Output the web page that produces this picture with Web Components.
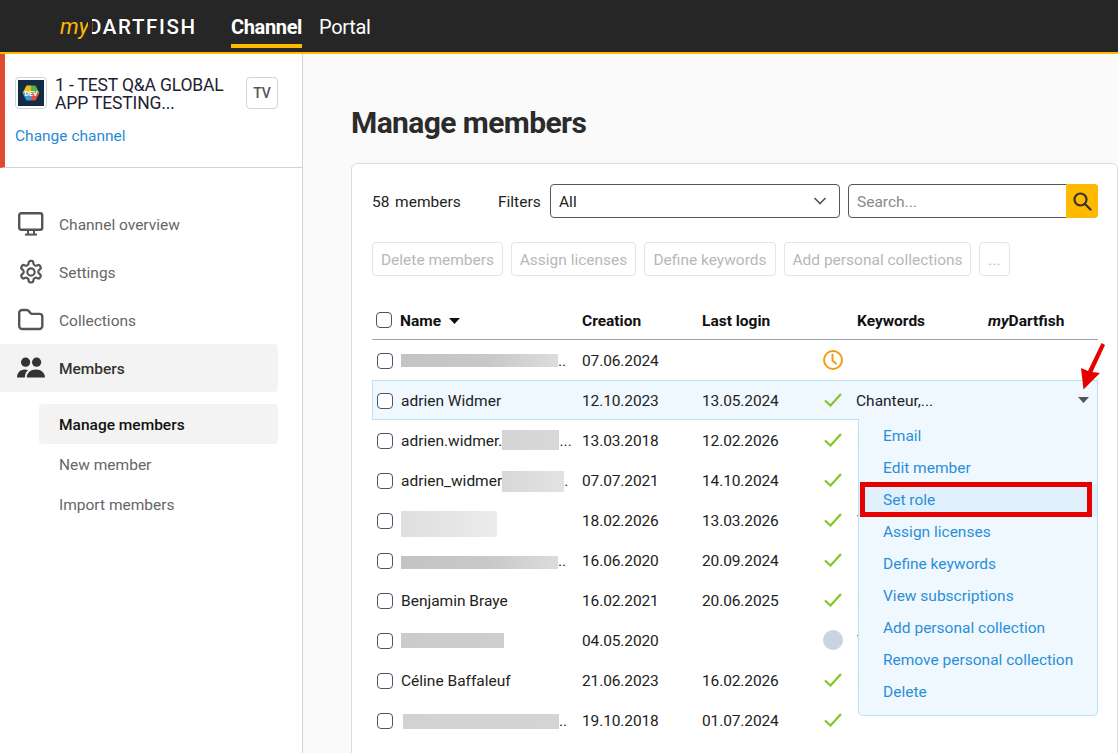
<!DOCTYPE html>
<html lang="en"><head><meta charset="utf-8"><title>Manage members</title>
<style>
html,body{margin:0;height:100%;overflow:hidden;background:#fafafa}
body{font:15.5px/20px Roboto,"Liberation Sans",sans-serif;letter-spacing:0;color:#222}
</style></head><body>
<x-app>
  <x-topbar slot="top"></x-topbar>
  <x-sidebar slot="side">
    <x-channel-card></x-channel-card>
    <x-nav-item icon="monitor" label="Channel overview"></x-nav-item>
    <x-nav-item icon="gear" label="Settings"></x-nav-item>
    <x-nav-item icon="folder" label="Collections"></x-nav-item>
    <x-nav-item icon="people" label="Members" active></x-nav-item>
    <x-sub-item label="Manage members" active first></x-sub-item>
    <x-sub-item label="New member"></x-sub-item>
    <x-sub-item label="Import members"></x-sub-item>
  </x-sidebar>
  <x-members slot="main">
    <x-row created="07.06.2024" status="pending"><x-blur w="157" h="13" y="-1"></x-blur>..</x-row>
    <x-row created="12.10.2023" login="13.05.2024" status="ok" keywords="Chanteur,..." open>adrien Widmer</x-row>
    <x-row created="13.03.2018" login="12.02.2026" status="ok" keywords="B">adrien.widmer.<x-blur w="57" h="20" y="-2" bg="#d4d4d4,#d8d8d8"></x-blur>...</x-row>
    <x-row created="07.07.2021" login="14.10.2024" status="ok">adrien_widmer<x-blur w="62" h="21" y="0" bg="#d8d8d8,#e2e2e2"></x-blur>.</x-row>
    <x-row created="18.02.2026" login="13.03.2026" status="ok" keywords="T"><x-blur w="96" h="26" y="6" bg="#dedede,#ececec"></x-blur></x-row>
    <x-row created="16.06.2020" login="20.09.2024" status="ok"><x-blur w="157" h="13" y="3"></x-blur>..</x-row>
    <x-row created="16.02.2021" login="20.06.2025" status="ok" keywords="B">Benjamin Braye</x-row>
    <x-row created="04.05.2020" status="none" keywords="T"><x-blur w="105" h="15" x="-2" y="-2" bg="#cbcbcb,#cecece"></x-blur></x-row>
    <x-row created="21.06.2023" login="16.02.2026" status="ok" keywords="B">Céline Baffaleuf</x-row>
    <x-row created="19.10.2018" login="01.07.2024" status="ok"><x-blur w="156" h="15" x="2" y="1" bg="#d2d2d2,#d4d4d4"></x-blur>..</x-row>
  </x-members>
</x-app>
<script>
const FONT='Roboto,"Liberation Sans",sans-serif';
function def(name,css,html,init){
  customElements.define(name,class extends HTMLElement{
    connectedCallback(){
      if(this.shadowRoot)return;
      const r=this.attachShadow({mode:'open'});
      r.innerHTML='<style>'+css+'</style>'+(typeof html==='function'?html(this):html);
      if(init)init(this,r);
    }
  });
}
const ICONS={
 monitor:'<svg width="28" height="26" viewBox="0 0 28 26" fill="none" stroke="#555" stroke-width="2.4"><rect x="2.2" y="2.2" width="23" height="16.6" rx="2"/><path d="M11 20v3M17 20v3" stroke-width="2"/><path d="M8 23.6h12" stroke-width="2"/></svg>',
 gear:'<svg width="28" height="26" viewBox="1 0 26 26" fill="none" stroke="#555" stroke-width="2" stroke-linecap="round" stroke-linejoin="round"><g transform="translate(1,0) scale(1.083)"><circle cx="12" cy="12" r="3.4"/><path d="M12.2 1.8h-.4a2 2 0 0 0-2 2v.2a2 2 0 0 1-1 1.7l-.4.25a2 2 0 0 1-2 0l-.17-.1a2 2 0 0 0-2.7.73l-.2.36a2 2 0 0 0 .73 2.73l.17.1a2 2 0 0 1 1 1.73v.5a2 2 0 0 1-1 1.74l-.17.1a2 2 0 0 0-.73 2.73l.2.36a2 2 0 0 0 2.7.73l.17-.1a2 2 0 0 1 2 0l.4.25a2 2 0 0 1 1 1.7v.2a2 2 0 0 0 2 2h.4a2 2 0 0 0 2-2v-.2a2 2 0 0 1 1-1.7l.4-.25a2 2 0 0 1 2 0l.17.1a2 2 0 0 0 2.7-.73l.2-.36a2 2 0 0 0-.73-2.73l-.17-.1a2 2 0 0 1-1-1.74v-.5a2 2 0 0 1 1-1.73l.17-.1a2 2 0 0 0 .73-2.73l-.2-.36a2 2 0 0 0-2.7-.73l-.17.1a2 2 0 0 1-2 0l-.4-.25a2 2 0 0 1-1-1.7v-.2a2 2 0 0 0-2-2z"/></g></svg>',
 folder:'<svg width="28" height="26" viewBox="0 0 28 26" fill="none" stroke="#555" stroke-width="2.4" stroke-linejoin="round"><path d="M2.2 6a3 3 0 0 1 3-3h4.300a3 3 0 0 1 2.300 1.100l1.300 1.700a3 3 0 0 0 2.300 1.100h7.400a2.500 2.500 0 0 1 2.500 2.500v9.600a3 3 0 0 1-3 3H5.200a3 3 0 0 1-3-3z"/></svg>',
 people:'<svg width="28" height="26" viewBox="0 0 28 26" fill="#333"><circle cx="8.6" cy="7.2" r="4.6"/><circle cx="19.6" cy="7.2" r="4.6"/><path d="M0 22.4c0-4.4 3.200-8 7.500-8 1.300 0 2.500.3 3.500.9-2 1.600-3.100 4-3.100 7.100H0zM9.800 22.4c0-4.600 3.900-8 9.100-8s9.100 3.400 9.100 8z"/></svg>'
};
def('x-app',`:host{display:grid;grid-template:54px 699px / 303px 815px;width:1118px;height:753px;overflow:hidden}
 .t{grid-column:1/3}`,
 `<div class="t"><slot name="top"></slot></div><slot name="side"></slot><slot name="main"></slot>`);
def('x-topbar',`:host{display:flex;align-items:stretch;height:54px;box-sizing:border-box;background:#262626;border-bottom:2px solid #ffb900;font-family:${FONT};color:#fff;letter-spacing:0}
 .logo{display:flex;align-items:center;margin-left:60px;width:171px;height:52px;position:relative}
 .my{font:italic 400 22px/24px ${FONT};color:#ffb900;width:28px;margin-top:2px}
 .d{font:500 20.500px/24px ${FONT};letter-spacing:1.650px;margin-top:1px}
 .cut{position:absolute;left:28px;top:18px;width:3.500px;height:18px;background:#262626}
 .tab{font-size:20px;line-height:54px;height:52px;box-sizing:border-box}
 .on{font-weight:700;width:71px;margin-right:17px;border-bottom:4px solid #ffb900;height:48px;letter-spacing:-.35px;white-space:nowrap}
 .tab.p{letter-spacing:-.3px}`,
 `<div class="logo"><span class="my">my</span><span class="d">DARTFISH</span><span class="cut"></span></div><div class="tab on">Channel</div><div class="tab p">Portal</div>`);
def('x-sidebar',`:host{display:block;background:#fff;border-right:1px solid #d4d4d4;height:699px;box-sizing:border-box}`,`<slot></slot>`);
def('x-channel-card',`:host{display:block;height:114px;box-sizing:border-box;border-left:5px solid #e04a33;border-bottom:1px solid #d0d4da;padding:23px 24px 0 10px;margin-bottom:32px;font-family:${FONT}}
 .top{display:flex;gap:8px;align-items:flex-start;height:32px}
 .ic{width:32px;height:32px;box-sizing:border-box;border:1px solid #ccd3de;border-radius:4px;display:flex;align-items:center;justify-content:center;flex:none}
 .tt{width:183px;font-size:17.500px;line-height:18px;color:#1d2233;letter-spacing:-.15px;margin-top:-1px;white-space:nowrap}
 .tv{width:32px;height:32px;box-sizing:border-box;border:1px solid #ccd3de;border-radius:4px;font-weight:500;font-size:14px;line-height:30px;text-align:center;color:#555}
 .ch{display:block;margin-top:17px;color:#2a8bd4;line-height:20px}`,
 `<div class="top"><div class="ic"><svg width="26" height="26" viewBox="0 0 26 26"><rect width="26" height="26" fill="#142b44"/><path d="M13 5.500H8.500L4.500 13H13z" fill="#f2b91c"/><path d="M13 5.500h4.500l4 7.500H13z" fill="#5cae45"/><path d="M4.500 13l4 7.500H13V13z" fill="#2f9fd8"/><path d="M21.500 13l-4 7.500H13V13z" fill="#e2503c"/><text x="13" y="15.500" font-size="7" font-family="Roboto" font-weight="700" fill="#fff" text-anchor="middle">DEV</text></svg></div><div class="tt">1 - TEST Q&amp;A GLOBAL<br>APP TESTING...</div><div class="tv">TV</div></div><a class="ch">Change channel</a>`);
def('x-nav-item',`:host{display:flex;align-items:center;height:48px;padding-left:17px;width:261px;border-radius:0 4px 4px 0;color:#666;gap:14px}
 :host([active]){background:#f3f3f3;color:#333;font-weight:500}
 span{padding-top:1px}
 svg{display:block} .i{width:28px;height:26px}`,
 h=>`<div class="i">${ICONS[h.getAttribute('icon')]}</div><span>${h.getAttribute('label')}</span>`);
def('x-sub-item',`:host{display:block;height:40px;line-height:42px;margin-left:39px;width:239px;padding-left:20px;box-sizing:border-box;border-radius:4px;color:#666}
 :host([active]){background:#f3f3f3;color:#111;font-weight:500}
 :host([first]){margin-top:12px}`,h=>h.getAttribute('label'));
def('x-blur',`:host{display:inline-block;flex:none;vertical-align:middle}`,'',h=>{
 const b=(h.getAttribute('bg')||'#c4c4c4,#c8c8c8 55%,#dcdcdc');
 h.style.width=h.getAttribute('w')+'px';h.style.height=h.getAttribute('h')+'px';
 h.style.background='linear-gradient(90deg,'+b+')';
 h.style.marginLeft=(h.getAttribute('x')||0)+'px';
 h.style.marginTop=(h.getAttribute('y')||0)+'px';
});
def('x-check',`:host{display:block;width:16px;height:16px;box-sizing:border-box;border:1.500px solid #4a5568;border-radius:4px;background:#fff;flex:none}`,'');
const COLS='29px 181px 120px 120px 35px 131px 110px';
def('x-members',`:host{display:block;padding:49px 0 0 48px;font-family:${FONT};height:699px;box-sizing:border-box}
 h1{margin:0 0 20px;font-size:30px;line-height:40px;font-weight:700;color:#2b2b2b;letter-spacing:-.6px}
 .card{background:#fff;border:1px solid #ddd;border-radius:6px 6px 0 0;padding:20px 19px 0 20px;height:600px;box-sizing:border-box;width:767px}
 .f{display:flex;align-items:center;height:34px}
 .f>span{padding-top:2px}
 .n{width:126px;white-space:pre;word-spacing:-1px}.l{width:52px}
 .sel{width:290px;height:34px;box-sizing:border-box;border:1px solid #555;border-radius:4px;display:flex;align-items:center;justify-content:space-between;padding:0 12px 0 8px;background:#fff;margin-right:8px}
 .sel span{padding-top:1px}
 .se{width:250px;height:34px;box-sizing:border-box;border:1px solid #555;border-radius:4px;display:flex;align-items:center;position:relative;padding:1px 0 0 8px;color:#8a8a8a}
 .go{position:absolute;right:-1px;top:-1px;width:32px;height:34px;background:#ffb900;border-radius:0 4px 4px 0;display:flex;align-items:center;justify-content:center}
 .b{display:flex;gap:8px;margin-top:24px;height:34px}
 .b span{box-sizing:border-box;height:34px;line-height:34px;border:1px solid #e4e4e4;border-radius:4px;text-align:center;color:#b8b8b8;white-space:nowrap}
 .h{display:grid;grid-template-columns:${COLS};align-items:center;font-weight:700;color:#111;height:40px;box-sizing:border-box;margin-top:24px;border-bottom:1px solid #9aa5b1}
 .h>div{padding-top:2px}
 .h x-check{margin-left:4px}
 .h .nm{display:flex;align-items:center;gap:8px;margin-left:-1px}
 .md i{font-weight:700}`,
 `<h1>Manage members</h1><div class="card">
 <div class="f"><span class="n">58  members</span><span class="l">Filters</span>
 <div class="sel"><span>All</span><svg width="14" height="8" viewBox="0 0 14 8" fill="none" stroke="#555" stroke-width="1.600"><path d="M1.500 1l5.500 5.500L12.500 1"/></svg></div>
 <div class="se">Search...<div class="go"><svg width="20" height="20" viewBox="0 0 20 20" fill="none" stroke="#333" stroke-width="2.200"><circle cx="8.500" cy="8.500" r="6"/><path d="M13 13l5.500 5.500" stroke-linecap="round"/></svg></div></div></div>
 <div class="b"><span style="width:131px">Delete members</span><span style="width:125px">Assign licenses</span><span style="width:132px">Define keywords</span><span style="width:187px">Add personal collections</span><span style="width:31px">...</span></div>
 <div class="h"><x-check></x-check><div class="nm">Name <svg width="11" height="6" viewBox="0 0 11 6"><path d="M0 0h11L5.500 6z" fill="#111"/></svg></div><div>Creation</div><div>Last login</div><div></div><div>Keywords</div><div class="md"><i>my</i>Dartfish</div></div>
 <slot></slot></div>`);
const ST={ok:'<svg width="18" height="14" viewBox="0 0 18 14" fill="none" stroke="#84c425" stroke-width="2.200"><path d="M1 7.500l5.500 5L17 1"/></svg>',
 pending:'<svg width="22" height="22" viewBox="0 0 22 22" fill="none" stroke="#f39c12" stroke-width="2"><circle cx="11" cy="11" r="9"/><path d="M10.500 5.500v6l3.500 3" stroke-linecap="round"/></svg>',
 none:'<svg width="22" height="22" viewBox="0 0 22 22"><circle cx="11" cy="11" r="10" fill="#c9d3e2"/></svg>'};
def('x-row',`:host{display:block;height:40px;position:relative}
 .g{display:grid;grid-template-columns:${COLS};align-items:center;height:40px}
 :host([open]) .g{background:#f0f8ff;box-shadow:inset 0 0 0 1px #b8e2f5}
 :host([open]) .kw{margin-left:-1px}
 x-check{margin-left:5px;margin-top:2px}
 .nm{display:flex;align-items:center;white-space:pre;overflow:hidden;height:40px;box-sizing:border-box;padding-top:2px}
 .dt{letter-spacing:-.12px;padding-top:2px}
 .st{display:flex;justify-content:center;width:22px}
 .kw{white-space:nowrap;padding-top:2px}
 .car{justify-self:end;margin-right:9px;grid-column:7}
 .menu{position:absolute;z-index:2;right:0;top:39px;width:240px;height:297px;box-sizing:border-box;background:#f0f8ff;border:1px solid #b8e2f5;border-top:0;border-radius:0 0 5px 5px;padding:1px 0 9px;color:#2b8fd6}
 .menu div{height:32px;line-height:32px;padding-left:24px;position:relative}
 .menu .s{background:#e0f1fd}
 .menu .s::after{content:"";position:absolute;left:1px;right:5px;top:-2px;bottom:-1px;border:5px solid #e60000}
 .arrow{position:absolute;z-index:3;right:-8px;top:-38px}`,
 h=>{const o=h.hasAttribute('open');return `<div class="g"><x-check></x-check><div class="nm"><slot></slot></div><div class="dt">${h.getAttribute('created')}</div><div class="dt">${h.getAttribute('login')||''}</div><div class="st">${ST[h.getAttribute('status')]}</div><div class="kw">${h.getAttribute('keywords')||''}</div>${o?'<svg class="car" width="11" height="6" viewBox="0 0 11 6"><path d="M0 0h11L5.500 6z" fill="#555"/></svg>':''}</div>`+
 (o?`<div class="menu"><div>Email</div><div>Edit member</div><div class="s">Set role</div><div>Assign licenses</div><div>Define keywords</div><div>View subscriptions</div><div>Add personal collection</div><div>Remove personal collection</div><div>Delete</div></div><svg class="arrow" width="26" height="50" viewBox="0 0 26 50"><path d="M21.500 1L25 3 12.500 30l7.500 1L3.500 47.500 1 26l7 3z" fill="#e60000"/></svg>`:'')});
</script>
</body></html>
